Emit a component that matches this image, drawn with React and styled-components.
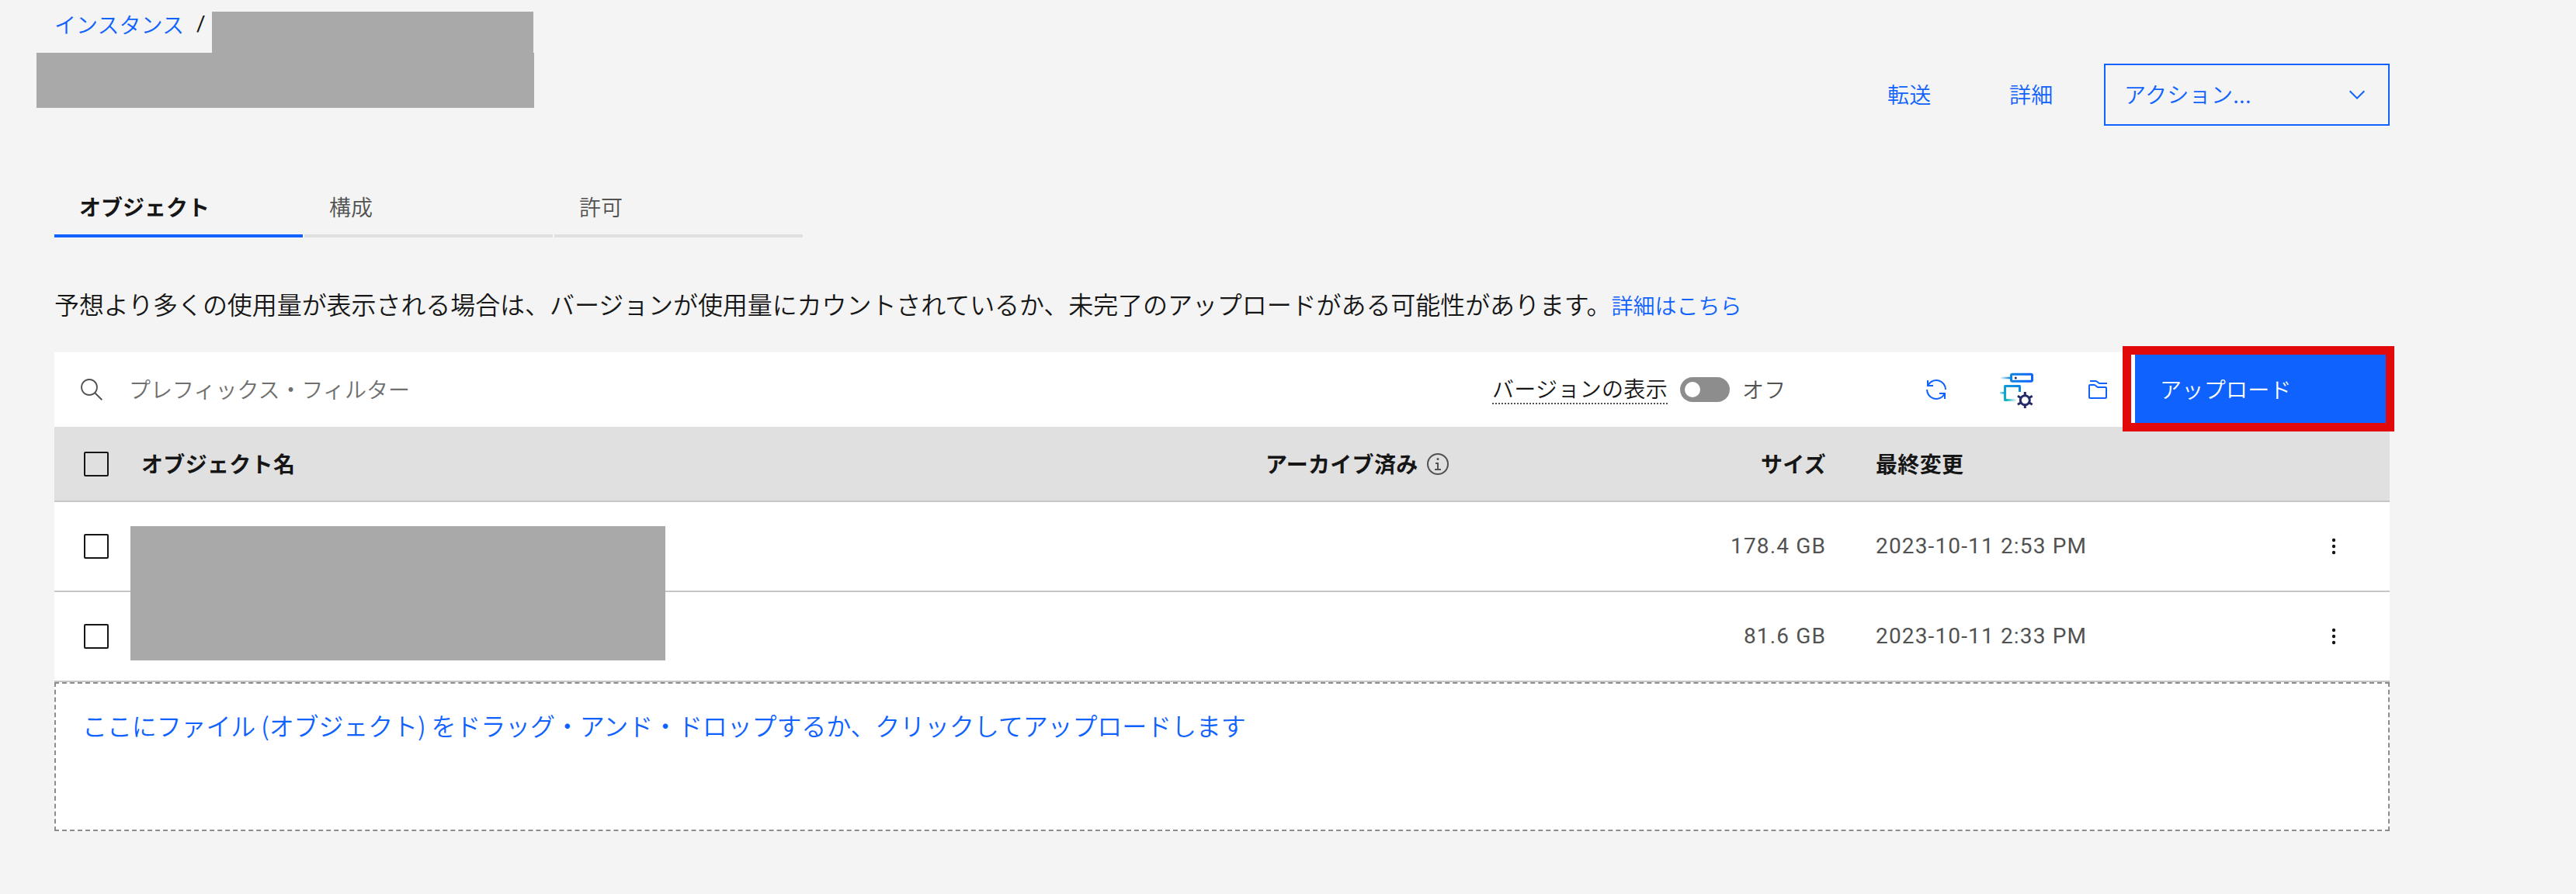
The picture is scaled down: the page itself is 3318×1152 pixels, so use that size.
import { useState } from "react";
import styled, { createGlobalStyle, css, ThemeProvider } from "styled-components";

const theme = {
  colors: {
    background: "#f4f4f4",
    layer: "#ffffff",
    header: "#e0e0e0",
    border: "#c6c6c6",
    borderStrong: "#8d8d8d",
    text: "#161616",
    textSecondary: "#525252",
    placeholder: "#6f6f6f",
    primary: "#0f62fe",
    highlight: "#e10909",
    mask: "#a9a9a9",
  },
  fonts: {
    ja: '"Noto Sans CJK JP", sans-serif',
    latin: 'Roboto, "Noto Sans CJK JP", sans-serif',
  },
};

const tabs = ["オブジェクト", "構成", "許可"];

const objects = [
  { size: "178.4 GB", modified: "2023-10-11 2:53 PM" },
  { size: "81.6 GB", modified: "2023-10-11 2:33 PM" },
];

export default function App() {
  const [activeTab, setActiveTab] = useState(tabs[0]);

  return (
    <ThemeProvider theme={theme}>
      <GlobalStyle />
      <Page>
        <Header>
          <Breadcrumb>
            <Link href="#">インスタンス</Link>
            <Slash>/</Slash>
            <BreadcrumbMask />
          </Breadcrumb>
          <TitleMask />
          <HeaderActions>
            <GhostButton>転送</GhostButton>
            <GhostButton>詳細</GhostButton>
            <ActionMenu>
              <ActionLabel>アクション...</ActionLabel>
              <ChevronIcon />
            </ActionMenu>
          </HeaderActions>
        </Header>

        <Tabs>
          {tabs.map((tab) => (
            <Tab key={tab} $active={tab === activeTab} onClick={() => setActiveTab(tab)}>
              {tab}
            </Tab>
          ))}
        </Tabs>

        <Notice>
          予想より多くの使用量が表示される場合は、バージョンが使用量にカウントされているか、未完了のアップロードがある可能性があります。
          <Link href="#">詳細はこちら</Link>
        </Notice>

        <Toolbar>
          <SearchIcon />
          <SearchInput placeholder="プレフィックス・フィルター" />
          <ToggleLabel>バージョンの表示</ToggleLabel>
          <Toggle role="switch" aria-checked="false" />
          <ToggleState>オフ</ToggleState>
          <ToolbarIcons>
            <RenewIcon />
            <MigrateIcon />
            <FoldersIcon />
          </ToolbarIcons>
          <UploadButton>アップロード</UploadButton>
        </Toolbar>

        <Table>
          <TableHeader>
            <Checkbox />
            <HeaderLabel>オブジェクト名</HeaderLabel>
            <ArchivedHeader>
              <HeaderLabel>アーカイブ済み</HeaderLabel>
              <InfoIcon />
            </ArchivedHeader>
            <SizeCell>
              <HeaderLabel>サイズ</HeaderLabel>
            </SizeCell>
            <HeaderLabel>最終変更</HeaderLabel>
          </TableHeader>
          {objects.map((object) => (
            <TableRow key={object.modified}>
              <Checkbox />
              <span />
              <span />
              <SizeCell>{object.size}</SizeCell>
              <span>{object.modified}</span>
              <OverflowIcon />
            </TableRow>
          ))}
          <NamesMask />
        </Table>

        <DropZone>
          ここにファイル (オブジェクト) をドラッグ・アンド・ドロップするか、クリックしてアップロードします
        </DropZone>
      </Page>
    </ThemeProvider>
  );
}

function ChevronIcon() {
  return (
    <svg width="32" height="32" viewBox="0 0 16 16" fill="currentColor">
      <path d="M8 11 3 6l.7-.7L8 9.6l4.3-4.3.7.7z" />
    </svg>
  );
}

function SearchIcon() {
  return (
    <SearchSvg width="32" height="32" viewBox="0 0 16 16" fill="currentColor">
      <path d="M15 14.3 10.7 10c1.9-2.3 1.6-5.8-.7-7.7S4.2.7 2.3 3 .7 8.8 3 10.7c2 1.7 5 1.7 7 0l4.3 4.3.7-.7zM2 6.5C2 4 4 2 6.5 2S11 4 11 6.5 9 11 6.5 11 2 9 2 6.5z" />
    </SearchSvg>
  );
}

function RenewIcon() {
  return (
    <svg width="32" height="32" viewBox="0 0 32 32" fill="currentColor">
      <path d="M12 10H6.78A11 11 0 0 1 27 16h2A13 13 0 0 0 6 7.68V4H4v8h8zM20 22h5.22A11 11 0 0 1 5 16H3a13 13 0 0 0 23 8.32V28h2v-8h-8z" />
    </svg>
  );
}

function FoldersIcon() {
  return (
    <svg width="32" height="32" viewBox="0 0 32 32" fill="currentColor">
      <path d="M26 28H6a2 2 0 0 1-2-2V11a2 2 0 0 1 2-2h5.67a2 2 0 0 1 1.2.4l3.46 2.6H26a2 2 0 0 1 2 2v12a2 2 0 0 1-2 2zM11.67 11H6v15h20V14H15.67z" />
      <path d="M28 9H17.67l-4-3H6V4h7.67a2 2 0 0 1 1.2.4L18.33 7H28z" />
    </svg>
  );
}

function MigrateIcon() {
  return (
    <svg width="48" height="48" viewBox="0 0 48 48" fill="none">
      <defs>
        <linearGradient id="server" x1="0" y1="0" x2="1" y2="0">
          <stop offset="0" stopColor="#0d86e0" />
          <stop offset="1" stopColor="#0f62fe" />
        </linearGradient>
        <linearGradient id="frame" x1="0" y1="1" x2="1" y2="0">
          <stop offset="0" stopColor="#08b4c4" />
          <stop offset="1" stopColor="#0f84e4" />
        </linearGradient>
        <linearGradient id="fadeIn" x1="2" y1="0" x2="15" y2="0" gradientUnits="userSpaceOnUse">
          <stop offset="0" stopColor="#1192c8" stopOpacity="0" />
          <stop offset="1" stopColor="#0d86e0" />
        </linearGradient>
        <linearGradient id="fadeOut" x1="10" y1="0" x2="24" y2="0" gradientUnits="userSpaceOnUse">
          <stop offset="0" stopColor="#08b0c4" />
          <stop offset="1" stopColor="#08b0c4" stopOpacity="0" />
        </linearGradient>
        <linearGradient id="stub" x1="0" y1="0" x2="1" y2="0">
          <stop offset="0" stopColor="#08b0c4" stopOpacity="0.3" />
          <stop offset="1" stopColor="#08a8cc" />
        </linearGradient>
      </defs>
      <rect x="2" y="7.7" width="13" height="2.6" fill="url(#fadeIn)" />
      <rect x="16.5" y="4.2" width="27" height="9" rx="1.5" stroke="url(#server)" strokeWidth="3" />
      <circle cx="22.3" cy="9" r="1.5" fill="#252a66" />
      <path d="M27.5 27v-7.5h-19v18H10" stroke="url(#frame)" strokeWidth="3" strokeLinejoin="round" />
      <rect x="10" y="36" width="14" height="3" fill="url(#fadeOut)" />
      <rect x="2" y="27" width="5.5" height="2.6" fill="url(#stub)" />
      <g stroke="#252a66" strokeWidth="3">
        <circle cx="34.3" cy="37.7" r="6" />
        <path d="M34.3 31.5V27M34.3 44v4M39.5 34.7l4.2-2.5M29.1 34.7l-4.2-2.5M39.5 40.7l4.2 2.5M29.1 40.7l-4.2 2.5" />
      </g>
    </svg>
  );
}

function InfoIcon() {
  return (
    <svg width="32" height="32" viewBox="0 0 32 32" fill="#525252">
      <path d="M17 22v-8h-4v2h2v6h-3v2h8v-2zM16 8a1.5 1.5 0 1 0 0 3 1.5 1.5 0 0 0 0-3z" />
      <path d="M16 30a14 14 0 1 1 14-14 14 14 0 0 1-14 14zm0-26a12 12 0 1 0 12 12A12 12 0 0 0 16 4z" />
    </svg>
  );
}

function OverflowIcon() {
  return (
    <svg width="32" height="32" viewBox="0 0 32 32" fill="#161616">
      <circle cx="16" cy="8" r="2.2" />
      <circle cx="16" cy="16" r="2.2" />
      <circle cx="16" cy="24" r="2.2" />
    </svg>
  );
}

const GlobalStyle = createGlobalStyle`
  * {
    box-sizing: border-box;
  }

  body {
    margin: 0;
    background: ${theme.colors.background};
  }
`;

const Page = styled.main`
  width: 3078px;
  height: 1152px;
  padding-left: 70px;
  color: ${({ theme }) => theme.colors.text};
  font-family: ${({ theme }) => theme.fonts.ja};
  font-size: 28px;
  font-weight: 350;
  line-height: 36px;
  letter-spacing: 0.32px;
`;

const Header = styled.header`
  display: grid;
  grid-template-rows: 68px 94px;
  grid-template-columns: 1fr auto;
  height: 226px;
`;

const Breadcrumb = styled.nav`
  display: flex;
  align-items: flex-start;
  padding-top: 13px;
  letter-spacing: 0;
`;

const Link = styled.a`
  color: ${({ theme }) => theme.colors.primary};
  font-size: 28px;
  letter-spacing: 0;
  text-decoration: none;
`;

const Slash = styled.span`
  width: 36px;
  padding-left: 16px;
  font-family: ${({ theme }) => theme.fonts.latin};
  font-weight: 400;
`;

const BreadcrumbMask = styled.div`
  width: 414px;
  height: 53px;
  margin-top: 2px;
  background: ${({ theme }) => theme.colors.mask};
`;

const TitleMask = styled.div`
  grid-row: 2;
  grid-column: 1;
  width: 641px;
  height: 71px;
  margin-left: -23px;
  background: ${({ theme }) => theme.colors.mask};
`;

const HeaderActions = styled.div`
  grid-row: 1 / 3;
  grid-column: 2;
  display: flex;
  align-items: center;
  align-self: end;
  height: 80px;
`;

const Button = styled.button`
  border: 0;
  border-radius: 0;
  background: none;
  color: ${({ theme }) => theme.colors.primary};
  font: inherit;
  letter-spacing: inherit;
  text-align: left;
  cursor: pointer;
`;

const GhostButton = styled(Button)`
  width: 157px;
  padding: 0 0 3px 35px;
`;

const ActionMenu = styled(Button)`
  display: flex;
  align-items: center;
  justify-content: space-between;
  width: 368px;
  height: 80px;
  padding: 0 24px;
  border: 2px solid ${({ theme }) => theme.colors.primary};
`;

const ActionLabel = styled.span`
  padding-bottom: 3px;
`;

const Tabs = styled.div`
  display: flex;
  gap: 2px;
  height: 80px;
`;

const Tab = styled(Button)`
  width: 320px;
  padding: 4px 32px 0;
  border-bottom: 4px solid #e0e0e0;
  color: ${({ theme }) => theme.colors.textSecondary};
  letter-spacing: 0;

  ${({ $active }) =>
    $active &&
    css`
      border-color: ${({ theme }) => theme.colors.primary};
      color: ${({ theme }) => theme.colors.text};
      font-weight: 600;
    `}
`;

const Notice = styled.p`
  height: 148px;
  margin: 0;
  padding-top: 61px;
  font-size: 32px;
  line-height: 48px;
  letter-spacing: -0.07px;
  white-space: nowrap;
`;

const Toolbar = styled.div`
  display: flex;
  align-items: center;
  height: 96px;
  background: ${({ theme }) => theme.colors.layer};
`;

const SearchSvg = styled.svg`
  margin: 0 32px;
  color: ${({ theme }) => theme.colors.textSecondary};
`;

const SearchInput = styled.input`
  flex: 1;
  height: 96px;
  padding: 0 0 2px;
  border: 0;
  background: none;
  font: inherit;
  letter-spacing: 0;

  &::placeholder {
    color: ${({ theme }) => theme.colors.placeholder};
    opacity: 1;
  }
`;

const ToggleLabel = styled.span`
  height: 38px;
  border-bottom: 2px dotted ${({ theme }) => theme.colors.textSecondary};
  line-height: 34px;
`;

const Toggle = styled.button`
  width: 64px;
  height: 32px;
  margin: 0 16px;
  padding: 6px;
  border: 0;
  border-radius: 16px;
  background: ${({ theme }) => theme.colors.borderStrong};

  &::before {
    content: "";
    display: block;
    width: 20px;
    height: 20px;
    border-radius: 50%;
    background: ${({ theme }) => theme.colors.layer};
  }
`;

const ToggleState = styled.span`
  width: 234px;
  padding-bottom: 2px;
  color: ${({ theme }) => theme.colors.textSecondary};
`;

const ToolbarIcons = styled.div`
  display: flex;
  align-items: center;
  justify-content: space-between;
  width: 240px;
  margin-right: 32px;
  color: ${({ theme }) => theme.colors.primary};
`;

const UploadButton = styled(Button)`
  position: relative;
  z-index: 1;
  width: 328px;
  height: 96px;
  padding: 0 32px 3px;
  background: ${({ theme }) => theme.colors.primary};
  color: ${({ theme }) => theme.colors.layer};

  &::after {
    content: "";
    position: absolute;
    inset: -8px -6px -6px -16px;
    border: 11px solid ${({ theme }) => theme.colors.highlight};
  }
`;

const Table = styled.div`
  position: relative;
`;

const TableRow = styled.div`
  display: grid;
  grid-template-columns: 74px 1448px 400px 386px 574px 32px;
  align-items: center;
  height: 116px;
  padding-left: 38px;
  border-bottom: 2px solid ${({ theme }) => theme.colors.border};
  background: ${({ theme }) => theme.colors.layer};
  color: ${({ theme }) => theme.colors.textSecondary};
  font-family: ${({ theme }) => theme.fonts.latin};
  font-weight: 400;
  letter-spacing: 1.15px;
`;

const TableHeader = styled(TableRow)`
  height: 97px;
  background: ${({ theme }) => theme.colors.header};
  color: ${({ theme }) => theme.colors.text};
  font-family: ${({ theme }) => theme.fonts.ja};
  font-weight: 600;
  letter-spacing: 0.32px;
`;

const HeaderLabel = styled.span`
  padding-bottom: 2px;
`;

const Checkbox = styled.span`
  width: 32px;
  height: 32px;
  border: 2px solid ${({ theme }) => theme.colors.text};
  border-radius: 2px;
`;

const ArchivedHeader = styled.span`
  display: flex;
  align-items: center;
  gap: 9px;
`;

const SizeCell = styled.span`
  display: flex;
  justify-content: flex-end;
  padding-right: 64px;
`;

// Covers the object names of both rows
const NamesMask = styled.div`
  position: absolute;
  top: 128px;
  left: 98px;
  width: 689px;
  height: 173px;
  background: ${({ theme }) => theme.colors.mask};
`;

const DropZone = styled.div`
  height: 192px;
  padding: 29px 34px;
  border: 2px dashed ${({ theme }) => theme.colors.borderStrong};
  background: ${({ theme }) => theme.colors.layer};
  color: ${({ theme }) => theme.colors.primary};
  font-size: 32px;
  line-height: 48px;
  letter-spacing: -0.12px;
`;
